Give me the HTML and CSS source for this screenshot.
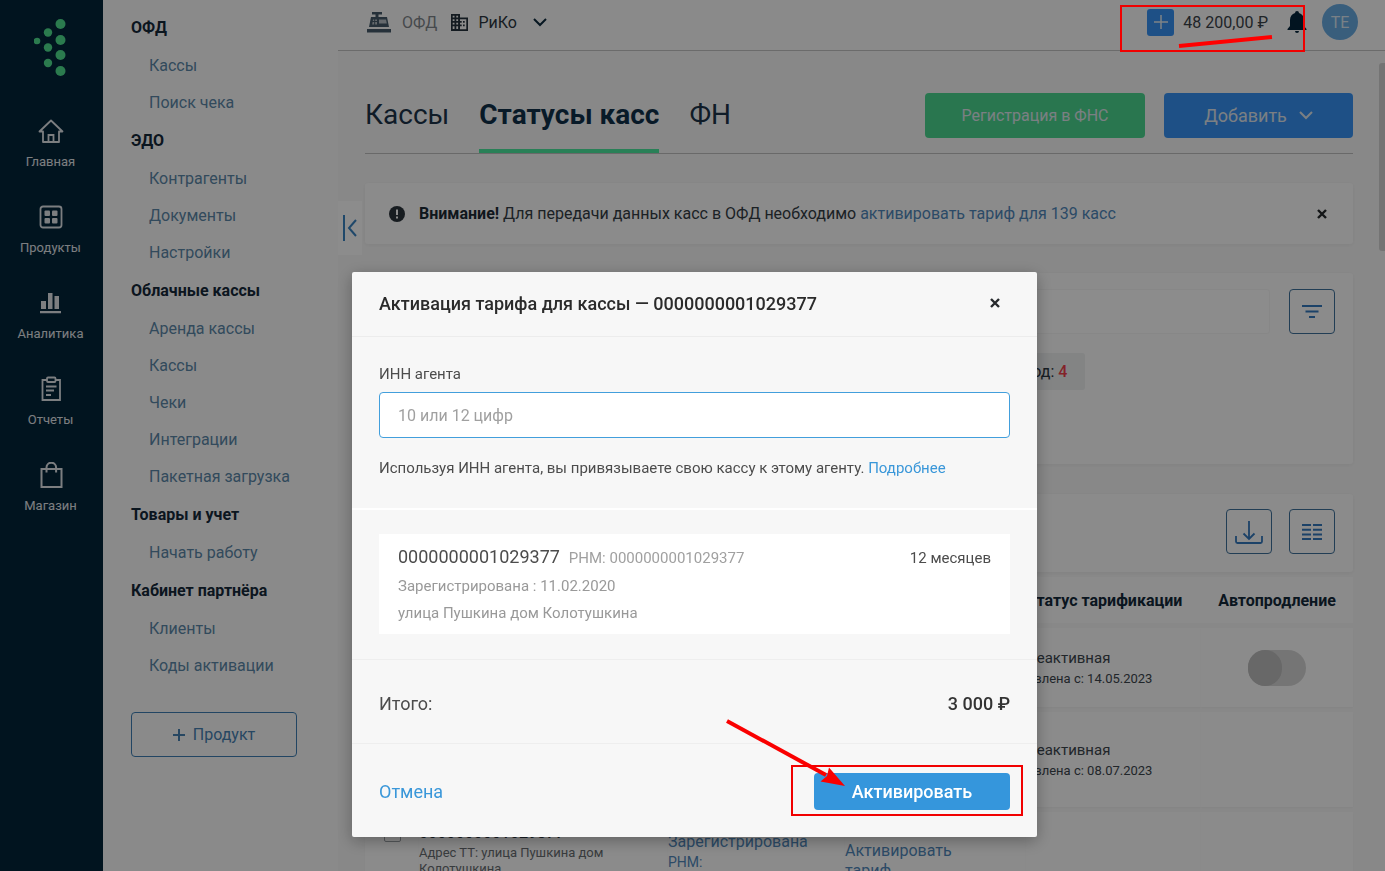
FILE: index.html
```html
<!DOCTYPE html>
<html lang="ru">
<head>
<meta charset="utf-8">
<meta name="viewport" content="width=device-width, initial-scale=1">
<title>Статусы касс</title>
<link rel="stylesheet" href="styles.css">
</head>
<body>
<div class="app">
  <nav class="rail" aria-label="Разделы">
    <svg class="rail-logo" width="34" height="60" viewBox="0 0 34 60" aria-hidden="true">
      <g fill="#4fe08f"><circle cx="3" cy="23" r="3.3"/><circle cx="14" cy="14.500" r="4.2"/><circle cx="14" cy="29.500" r="4.2"/><circle cx="14" cy="45" r="4.2"/><circle cx="26.500" cy="6" r="5"/><circle cx="26.500" cy="22" r="5"/><circle cx="26.500" cy="37" r="5"/><circle cx="26.500" cy="53" r="5"/></g>
    </svg>
    <a class="rail-item" href="#">
      <svg width="26" height="26" viewBox="0 0 26 26" fill="none" stroke="currentColor" stroke-width="1.8"><path d="M1.5 13.5 13 2.5l11.500 11H21V24H5V13.500z" stroke-linejoin="round"/><path d="M10.500 24v-7h5v7"/></svg>
      <span>Главная</span>
    </a>
    <a class="rail-item" href="#">
      <svg width="26" height="26" viewBox="0 0 26 26"><rect x="2.500" y="2.500" width="21" height="21" rx="2.500" fill="none" stroke="currentColor" stroke-width="1.800"/><g fill="currentColor"><rect x="6.500" y="6.500" width="5.500" height="5.500" rx="1"/><rect x="14" y="6.500" width="5.500" height="5.500" rx="1"/><rect x="6.500" y="14" width="5.500" height="5.500" rx="1"/><rect x="14" y="14" width="5.500" height="5.500" rx="1"/></g></svg>
      <span>Продукты</span>
    </a>
    <a class="rail-item" href="#">
      <svg width="26" height="26" viewBox="0 0 26 26" fill="currentColor"><path d="M4 11h5v8H4zM11 3h4.500v16H11zM17.500 6H22v13h-4.500zM3 21h21v2.200H3z"/></svg>
      <span>Аналитика</span>
    </a>
    <a class="rail-item" href="#">
      <svg width="26" height="26" viewBox="0 0 26 26" fill="none" stroke="currentColor" stroke-width="1.800"><path d="M9 4H4.500v20h17.500V4H17.500"/><rect x="9" y="1.500" width="8.500" height="4.500" rx="1"/><path d="M8 10.500h10.500M8 14.500h8M8 19h5"/></svg>
      <span>Отчеты</span>
    </a>
    <a class="rail-item" href="#">
      <svg width="26" height="26" viewBox="0 0 26 26" fill="none" stroke="currentColor" stroke-width="2"><path d="M3.500 7h20v18h-20z"/><path d="M8.500 10.500V5.500a4.600 4.600 0 0 1 9.600 0V10.500"/></svg>
      <span>Магазин</span>
    </a>
  </nav>

  <nav class="side" aria-label="Меню">
    <h2 class="side-title">ОФД</h2>
    <a class="side-link" href="#">Кассы</a>
    <a class="side-link" href="#">Поиск чека</a>
    <h2 class="side-title">ЭДО</h2>
    <a class="side-link" href="#">Контрагенты</a>
    <a class="side-link" href="#">Документы</a>
    <a class="side-link" href="#">Настройки</a>
    <h2 class="side-title">Облачные кассы</h2>
    <a class="side-link" href="#">Аренда кассы</a>
    <a class="side-link" href="#">Кассы</a>
    <a class="side-link" href="#">Чеки</a>
    <a class="side-link" href="#">Интеграции</a>
    <a class="side-link" href="#">Пакетная загрузка</a>
    <h2 class="side-title">Товары и учет</h2>
    <a class="side-link" href="#">Начать работу</a>
    <h2 class="side-title">Кабинет партнёра</h2>
    <a class="side-link" href="#">Клиенты</a>
    <a class="side-link" href="#">Коды активации</a>
    <button class="side-add" type="button">
      <svg width="12" height="12" viewBox="0 0 12 12" stroke="currentColor" stroke-width="2"><path d="M6 0v12M0 6h12"/></svg>
      Продукт
    </button>
  </nav>

  <div class="main">
    <header class="topbar">
      <svg class="topbar-till" width="24" height="22" viewBox="0 0 24 22" fill="currentColor" aria-hidden="true"><path d="M5 1h10v2.500h-3.500V6H20l2 10H2L4 6h4.500V3.500H5zM0 18h24v3.500H0z"/><path d="M6 8.500h4v5H5.200zM12 8.500h7l.8 4H12z" fill="#b8c0c6"/><path d="M5 10.500h5M7.700 8v6" stroke="currentColor"/></svg>
      <span class="topbar-product">ОФД</span>
      <svg class="topbar-firm" width="17" height="17" viewBox="0 0 17 17" aria-hidden="true"><path fill="currentColor" fill-rule="evenodd" d="M0 0h9v3.500h8V17H0zM1.700 1.700v1.800h1.800V1.700zM5.300 1.700v1.800h1.800V1.700zM1.700 5.200V7h1.800V5.200zM5.300 5.200V7h1.800V5.200zM1.700 8.700v1.800h1.800V8.700zM5.300 8.700v1.800h1.800V8.700zM1.700 12.200v2.800h1.800v-2.800zM5.300 12.200v2.800h1.800v-2.800zM9 5.200V7h1.700v1.700H9v1.800h1.700v1.700H9v3.100h6.300V5.200zM12 7h1.700v1.700H12zM12 10.500h1.700v1.700H12z"/></svg>
      <button class="topbar-company" type="button">РиКо
        <svg width="14" height="9" viewBox="0 0 14 9" fill="none" stroke="currentColor" stroke-width="2"><path d="m1 1 6 6 6-6"/></svg>
      </button>
      <button class="topbar-plus" type="button" aria-label="Пополнить баланс"><svg width="14" height="14" viewBox="0 0 14 14" stroke="currentColor" stroke-width="1.500"><path d="M7 0v14M0 7h14"/></svg></button>
      <span class="topbar-balance">48 200,00 ₽</span>
      <button class="topbar-bell" type="button" aria-label="Уведомления"><svg width="20" height="22" viewBox="0 0 20 22" fill="currentColor"><path d="M10 0a2 2 0 0 1 2 2c3 1 5 3.500 5 7v6l2.500 3v1H.5v-1L3 15V9c0-3.500 2-6 5-7a2 2 0 0 1 2-2zM8 20h4a2 2 0 0 1-4 0z"/></svg></button>
      <span class="topbar-avatar">ТЕ</span>
    </header>

    <main class="content">
      <button class="collapse" type="button" aria-label="Свернуть меню"><svg width="14" height="26" viewBox="0 0 14 26" fill="none" stroke="currentColor" stroke-width="2"><path d="M1 0v26M13 5l-7 8 7 8"/></svg></button>
      <div class="head">
        <nav class="tabs" aria-label="Вкладки">
          <a class="tab" href="#">Кассы</a>
          <a class="tab tab-active" href="#">Статусы касс</a>
          <a class="tab" href="#">ФН</a>
        </nav>
        <div class="head-actions">
          <button class="btn-green" type="button">Регистрация в ФНС</button>
          <button class="btn-blue" type="button">Добавить
            <svg width="14" height="9" viewBox="0 0 14 9" fill="none" stroke="currentColor" stroke-width="2"><path d="m1 1 6 6 6-6"/></svg>
          </button>
        </div>
      </div>

      <div class="card alert">
        <svg width="16" height="16" viewBox="0 0 16 16" aria-hidden="true"><circle cx="8" cy="8" r="8" fill="#2b333b"/><path d="M8 3.500v5.500M8 10.500v2" stroke="#fff" stroke-width="2"/></svg>
        <p class="alert-text"><b>Внимание!</b> Для передачи данных касс в ОФД необходимо <a href="#">активировать тариф для 139 касс</a></p>
        <button class="close" type="button" aria-label="Закрыть"><svg width="10" height="10" viewBox="0 0 10 10" stroke="currentColor" stroke-width="2.400"><path d="m1 1 8 8M9 1 1 9"/></svg></button>
      </div>

      <section class="card search">
        <div class="search-row">
          <input class="search-input" type="text" aria-label="Поиск">
          <button class="btn-icon" type="button" aria-label="Фильтр"><svg width="22" height="14" viewBox="0 0 22 14" stroke="currentColor" stroke-width="2"><path d="M1 1h20M4.500 6.500h13M8 12h6"/></svg></button>
        </div>
        <div class="chips"><span class="chip">Нужен код: <b>4</b></span></div>
      </section>

      <section class="list">
        <div class="card list-tools">
          <button class="btn-icon" type="button" aria-label="Скачать"><svg width="28" height="26" viewBox="0 0 28 26" fill="none" stroke="currentColor" stroke-width="1.800"><path d="M14 2v18M8.500 14.500 14 20l5.500-5.500M1 17v5.500c0 1 .5 1.500 1.500 1.500h23c1 0 1.500-.5 1.500-1.500V17"/></svg></button>
          <button class="btn-icon" type="button" aria-label="Столбцы"><svg width="22" height="16" viewBox="0 0 22 16" stroke="currentColor" stroke-width="2"><path d="M1 1h9M12 1h9M1 5.700h9M12 5.700h9M1 10.400h9M12 10.400h9M1 15h9M12 15h9"/></svg></button>
        </div>
        <table class="table">
          <colgroup><col class="col-check"><col><col class="col-reg"><col class="col-tariff"><col class="col-status"><col class="col-auto"></colgroup>
          <thead><tr><th></th><th></th><th></th><th></th><th>Статус тарификации</th><th class="center">Автопродление</th></tr></thead>
          <tbody>
            <tr class="row-first"><td></td><td></td><td></td><td></td>
              <td class="status">Неактивная<small>Явлена с: 14.05.2023</small></td>
              <td class="center"><label class="switch"><input type="checkbox" aria-label="Автопродление"><span></span></label></td></tr>
            <tr class="row-second"><td></td><td></td><td></td><td></td>
              <td class="status">Неактивная<small>Явлена с: 08.07.2023</small></td><td></td></tr>
            <tr class="row-third">
              <td><input class="check" type="checkbox" aria-label="Выбрать кассу"></td>
              <td><div class="till-name">0000000001029377</div><div class="till-address">Адрес ТТ: улица Пушкина дом Колотушкина</div></td>
              <td><a class="reg" href="#">Зарегистрирована<small>РНМ: 0000000001029377</small></a></td>
              <td><a class="activate" href="#">Активировать тариф</a></td><td></td><td></td></tr>
          </tbody>
        </table>
      </section>
      <div class="scrollbar"></div>
    </main>
  </div>
</div>

<div class="overlay">
  <form class="modal" role="dialog" aria-labelledby="modal-title">
    <div class="modal-head">
      <h1 id="modal-title">Активация тарифа для кассы — 0000000001029377</h1>
      <button class="close" type="button" aria-label="Закрыть"><svg width="10" height="10" viewBox="0 0 10 10" stroke="currentColor" stroke-width="2.400"><path d="m1 1 8 8M9 1 1 9"/></svg></button>
    </div>
    <div class="modal-agent">
      <label for="inn">ИНН агента</label>
      <input id="inn" class="inn" type="text" placeholder="10 или 12 цифр">
      <p>Используя ИНН агента, вы привязываете свою кассу к этому агенту. <a href="#">Подробнее</a></p>
    </div>
    <div class="modal-till">
      <div class="till-card">
        <div class="till-line"><span class="till-number">0000000001029377</span><span class="till-rnm">РНМ: 0000000001029377</span><span class="till-term">12 месяцев</span></div>
        <div class="till-meta">Зарегистрирована : 11.02.2020</div>
        <div class="till-meta">улица Пушкина дом Колотушкина</div>
      </div>
    </div>
    <div class="modal-total"><span>Итого:</span><b>3 000 ₽</b></div>
    <div class="modal-foot">
      <button class="btn-cancel" type="button">Отмена</button>
      <button class="btn-submit" type="submit">Активировать</button>
    </div>
    <svg class="mark-submit" width="304" height="104" viewBox="0 0 304 104" aria-hidden="true">
      <rect x="72" y="51" width="230" height="49" fill="none" stroke="#f10000" stroke-width="2"/>
      <path d="M7 6 106 60" stroke="#fa0000" stroke-width="4"/>
      <path d="M125 71 100.500 66.500 107 61 109 52.500z" fill="#fa0000"/>
    </svg>
  </form>
</div>
<svg class="mark-balance" width="186" height="48" viewBox="0 0 186 48" aria-hidden="true">
  <rect x="2" y="2" width="183" height="45" fill="none" stroke="#f10000" stroke-width="2"/>
  <path d="M60 42 153 33" stroke="#ff0000" stroke-width="4"/>
</svg>
</body>
</html>
```
FILE: styles.css
```css
* { box-sizing: border-box; }

body {
  margin: 0;
  font-family: Roboto, "Liberation Sans", sans-serif;
  font-size: 15px;
  color: #2b3640;
  background: #f8f8f8;
}

h1, h2, p { margin: 0; }
a { color: #5088bb; text-decoration: none; }
button { padding: 0; border: 0; background: none; font: inherit; color: inherit; cursor: pointer; }
svg { display: block; flex: none; }

.app { display: flex; height: 100vh; overflow: hidden; }

/* Icon rail */
.rail { flex: none; display: flex; flex-direction: column; align-items: center; gap: 34px; width: 103px; padding: 18px 2px 0 0; background: #03253a; }
.rail-logo { margin-bottom: 6px; }
.rail-item { display: flex; flex-direction: column; align-items: center; gap: 10px; height: 52px; font-size: 13px; line-height: 16px; color: #e2e6ea; }

/* Section menu */
.side { flex: none; width: 235px; padding: 8px 28px 0; background: #fcfcfc; }
.side-title { font-size: 16px; line-height: 39px; font-weight: 700; color: #15283a; white-space: nowrap; }
.side-link { display: block; padding-left: 18px; font-size: 16px; line-height: 37px; color: #5b87a8; white-space: nowrap; }
.side-add { display: flex; align-items: center; justify-content: center; gap: 8px; width: 166px; height: 45px; margin-top: 28px; border: 1px solid #3f7fb4; border-radius: 4px; font-size: 16px; color: #4781b3; }

/* Top bar */
.main { flex: 1; min-width: 0; display: flex; flex-direction: column; }
.topbar { flex: none; display: flex; align-items: center; height: 51px; padding: 0 27px 6px 29px; border-bottom: 1px solid #c4c4c4; background: #fcfcfc; font-size: 16px; }
.topbar-till { color: #455a6b; }
.topbar-product { margin: 0 14px 0 11px; color: #80868b; }
.topbar-firm { color: #26323c; }
.topbar-company { display: flex; align-items: center; gap: 16px; margin: 0 auto 0 10px; }
.topbar-company svg { color: #0e2b3f; }
.topbar-plus { display: flex; align-items: center; justify-content: center; width: 27px; height: 27px; border-radius: 3px; background: #3793f4; color: #e6eef5; }
.topbar-balance { margin: 0 19px 0 9px; color: #3a4249; }
.topbar-bell { margin-right: 15px; color: #04253b; }
.topbar-avatar { display: flex; align-items: center; justify-content: center; width: 36px; height: 36px; border-radius: 50%; background: #69abe2; color: #dceaf5; }

/* Page */
.content { position: relative; flex: 1; min-height: 0; padding: 42px 32px 0 27px; }
.collapse { position: absolute; left: 0; top: 150px; display: flex; align-items: center; width: 24px; height: 54px; padding-left: 5px; background: #fff; color: #3a83c2; }
.scrollbar { position: absolute; right: 0; top: 12px; width: 6px; height: 188px; border-radius: 3px 0 0 3px; background: #d4d4d4; }
.head { display: flex; justify-content: space-between; height: 61px; margin-bottom: 29px; border-bottom: 1px solid #c0c0c0; }
.tabs { display: flex; gap: 30px; }
.tab { height: 60px; font-size: 28px; line-height: 43px; color: #1c3449; white-space: nowrap; }
.tab-active { border-bottom: 4px solid #4cea9f; font-weight: 700; color: #10304a; }
.head-actions { display: flex; gap: 19px; }
.btn-green, .btn-blue { display: flex; align-items: center; justify-content: center; height: 45px; border-radius: 4px; color: #e0e8ee; white-space: nowrap; }
.btn-green { width: 220px; background: #4bd890; font-size: 16px; }
.btn-blue { gap: 12px; width: 189px; background: #3793f4; font-size: 18px; }
.card { background: #fdfdfd; border-radius: 3px; box-shadow: 0 1px 4px #0000000d; }
.alert { display: flex; align-items: center; gap: 14px; height: 61px; margin-bottom: 29px; padding: 0 26px 0 24px; }
.alert-text { flex: 1; font-size: 16px; color: #333c44; }
.alert-text b { color: #1d2a35; }
.close { color: #26292c; }
.search { height: 191px; margin-bottom: 30px; padding: 16px 18px; }
.search-row { display: flex; gap: 19px; }
.search-input { flex: 1; border: 1px solid #f6f6f6; border-radius: 3px; background: #fff; }
.btn-icon { display: flex; align-items: center; justify-content: center; width: 46px; height: 45px; border: 1px solid #3f719b; border-radius: 4px; color: #3378bd; }
.chips { display: flex; margin: 19px 0 0 570px; }
.chip { padding: 0 18px; border-radius: 3px; font-size: 16px; line-height: 37px; background: #eef0f1; white-space: nowrap; }
.chip b { font-weight: 500; color: #ef3f4b; }

/* List */
.list-tools { display: flex; justify-content: flex-end; gap: 17px; height: 78px; padding: 15px 18px; }
.table { width: 100%; table-layout: fixed; border-spacing: 0 5px; }
.col-check { width: 54px; }
.col-reg { width: 177px; }
.col-tariff { width: 181px; }
.col-status { width: 175px; }
.col-auto { width: 152px; }
.table th { height: 46px; padding: 0; background: #fdfdfd; text-align: left; font-size: 16px; font-weight: 700; color: #13283a; white-space: nowrap; }
.table td { padding: 0; background: #fdfdfd; box-shadow: 0 1px 2px #00000008; font-size: 16px; line-height: 20px; }
.table .status { padding-top: 3px; font-size: 15px; color: #3c464e; }
.table small { display: block; font-size: 13px; line-height: 22px; white-space: nowrap; }
.table .center { text-align: center; }
.row-first { height: 79px; }
.row-second { height: 95px; }
.row-third { height: 120px; vertical-align: top; }
.table .row-third td { padding-top: 9px; }
.check { appearance: none; display: block; width: 17px; height: 17px; margin: 4px 0 0 19px; border: 1px solid #9aa0a5; border-radius: 2px; }
.till-name { font-weight: 500; line-height: 24px; }
.till-address { width: 200px; font-size: 13px; line-height: 16px; color: #676c70; }
.reg, .activate { display: block; width: 150px; }
.reg { padding-top: 11px; }
.table .reg small { width: 110px; font-size: 14px; line-height: 20px; white-space: normal; }
.activate { width: 120px; padding-top: 20px; }
.switch { display: inline-flex; vertical-align: middle; width: 58px; height: 36px; border-radius: 18px; background: #d6d6d6; }
.switch input { position: absolute; opacity: 0; }
.switch span { width: 34px; height: 36px; border-radius: 18px; background: #bdbdbd; }

/* Dialog */
.overlay { position: fixed; inset: 0; display: flex; justify-content: center; align-items: flex-start; padding: 272px 0 0 4px; background: #00000073; }
.modal { position: relative; width: 685px; border-radius: 2px; background: #f7f7f7; color: #4c4c4c; box-shadow: 0 4px 16px #0000004d; }
.modal-head { display: flex; align-items: center; justify-content: space-between; height: 65px; padding: 0 37px 2px 27px; border-bottom: 1px solid #ececec; }
.modal-head h1 { font-size: 18px; font-weight: 500; color: #2b2b2b; }
.modal-agent { height: 173px; padding: 26px 27px 0 27px; border-bottom: 2px solid #fff; }
.modal-agent label { display: block; line-height: 22px; }
.inn { display: block; width: 100%; height: 46px; margin: 7px 0 19px; padding: 0 18px; border: 1px solid #429fdc; border-radius: 4px; background: #fff; font: inherit; font-size: 16px; outline: none; }
.inn::placeholder { color: #a0a0a0; opacity: 1; }
.modal-agent p { line-height: 22px; }
.modal a, .btn-cancel { color: #3a97d9; }
.modal-till { height: 150px; padding: 24px 27px 0 27px; border-bottom: 1px solid #eee; }
.till-card { height: 100px; padding: 8px 19px; background: #fff; }
.till-line { display: flex; align-items: baseline; gap: 9px; line-height: 30px; }
.till-number { font-size: 18px; }
.till-rnm { color: #a0a0a0; }
.till-term { margin-left: auto; }
.till-meta { line-height: 27px; color: #999; }
.modal-total { display: flex; align-items: center; justify-content: space-between; height: 84px; padding: 4px 27px 0 27px; border-bottom: 1px solid #eee; font-size: 18px; }
.modal-total b { font-weight: 500; color: #333; }
.modal-foot { display: flex; align-items: center; justify-content: space-between; height: 93px; padding: 2px 27px 0 27px; font-size: 18px; }
.btn-submit { width: 196px; height: 37px; border-radius: 4px; background: #3596dc; color: #fff; font-weight: 500; }

/* Pointer marks */
.mark-submit { position: absolute; right: 13px; bottom: 18px; pointer-events: none; }
.mark-balance { position: fixed; top: 4px; right: 80px; pointer-events: none; }
```
